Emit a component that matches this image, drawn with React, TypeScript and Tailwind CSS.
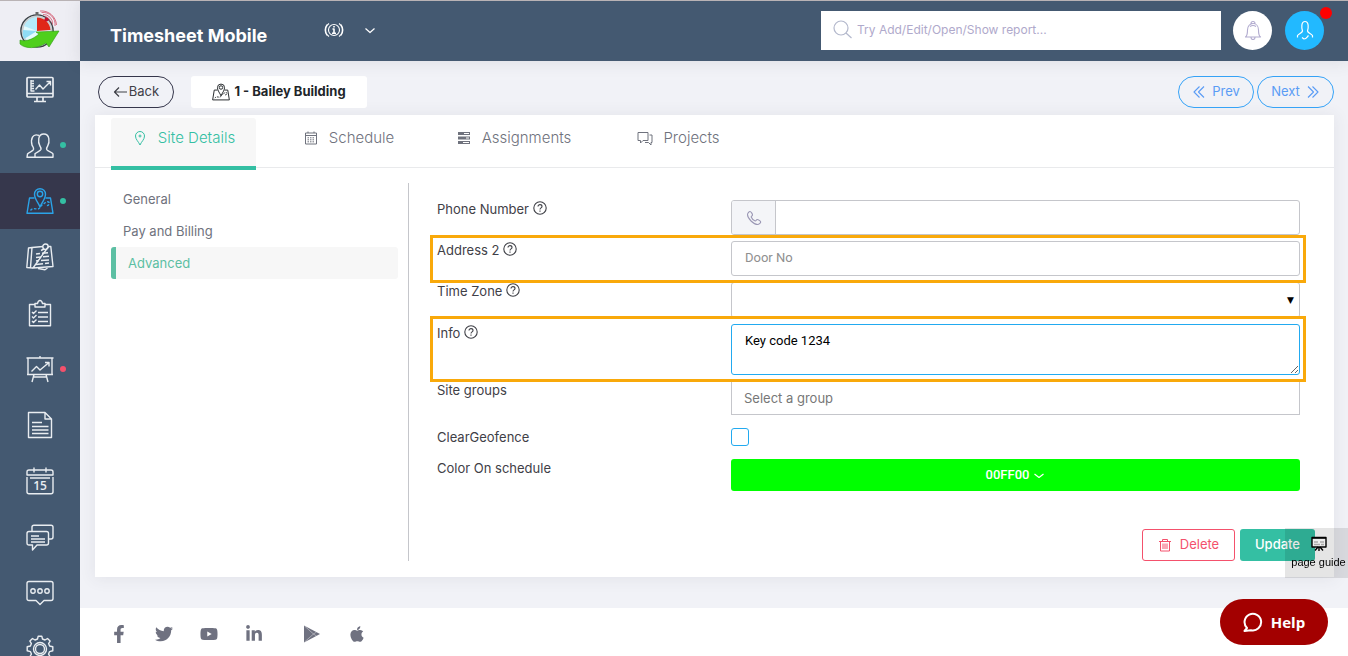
import { useState } from "react";
import type { ReactNode } from "react";
import {
  FaApple,
  FaFacebookF,
  FaLinkedinIn,
  FaTwitter,
  FaYoutube,
} from "react-icons/fa";

type IconProps = { children: ReactNode; className?: string; box?: number; stroke?: number };

function Icon({ children, className = "size-7", box = 28, stroke = 1.4 }: IconProps) {
  return (
    <svg
      viewBox={`0 0 ${box} ${box}`}
      className={className}
      fill="none"
      stroke="currentColor"
      strokeWidth={stroke}
      strokeLinejoin="round"
      aria-hidden="true"
    >
      {children}
    </svg>
  );
}

const mapPin = (
  <>
    <path d="M14 20C12.5 16 8.5 12 8.5 7.2a5.500 5.500 0 0 1 11 0C19.500 12 15.500 16 14 20z" />
    <circle cx="14" cy="7" r="2.700" />
    <path d="M8.500 11H3.500L1 26.300h26L24.500 11h-5" />
    <path d="M4.500 23.500c2-3 5-1.500 7-1.500 3 0 2.500-3 5-4.500 2-1 4-3.500 6-2.500s0 4-2 3.500" strokeDasharray="2.500 1.500" />
  </>
);

type NavItem = { name: string; icon: ReactNode; dot?: "green" | "red"; active?: boolean };

const NAV_ITEMS: NavItem[] = [
  {
    name: "Dashboard",
    icon: (
      <>
        <rect x="1" y="2.500" width="26" height="19.500" rx="1" strokeWidth="1.700" />
        <path d="M1 18.500h26M11 22v4M17 22v4M8 26.500h12" strokeWidth="1.700" />
        <path d="M5 5v11.500M5 6h3M5 8.500h3M5 11h3M5 13.500h3M5 16h3.500" />
        <path d="M9.500 14.500l4-4.500 3.500 4L24 7M20.500 6.500H24.500v4" />
      </>
    ),
  },
  {
    name: "Employees",
    dot: "green",
    icon: (
      <>
        <path d="M9 26.300h18v-3.500c-1.500-2-5.500-2.500-6.300-4.300-.4-1.500.3-2.500 1-3.500 2-4 2.300-12-3.900-12s-5.900 8-3.900 12c.7 1 1.400 2 1 3.500C14 20.300 10.500 21 9 22.800z" />
        <path d="M13 4.500c-6.500-2.500-8.500 3.500-7 9.500.4 1.500 2 2.500 1.500 4.500-.6 1.800-4.500 2.500-6 4.500l-.5 3.300h8" />
      </>
    ),
  },
  { name: "Sites", dot: "green", active: true, icon: mapPin },
  {
    name: "Notes",
    icon: (
      <>
        <path d="M6 4.500l11-1M22.500 3.500h2.300L27 23.500 7 25z" />
        <path d="M6 4.500L2.500 5 .800 24.500 7 25M6 4.500L4.500 24.500M12 25.500l7 1.300 2.500-1.800" />
        <circle cx="19.500" cy="3.700" r="2.700" />
        <path d="M18 6l-3 1.500M10 11l4-.500M16 10.200l6-.500M10 14.500l5-.500M17 13.800l6-.500M10 18l3-.500M15 17.500l8-.500M10 21.500l7-.700M19 20.500l4-.500" />
      </>
    ),
  },
  {
    name: "Tasks",
    icon: (
      <>
        <path d="M9 5.500H3.500v21.300h21V5.500H19" />
        <path d="M9 8V4.500h2.500C12 2.300 13 1.500 14 1.500s2 .8 2.500 3H19V8z" />
        <path d="M12 13.500h10M12 18h10M12 22.500h10M6 13l1.500 1.500L10.500 11.500M6 17.500L7.500 19l3-3M6 22l1.500 1.500 3-3" />
      </>
    ),
  },
  {
    name: "Reports",
    dot: "red",
    icon: (
      <>
        <path d="M0.500 3h27M14 1v2M2 3v16.500h24V3M1 19.500h26M8 19.500L6 27M20 19.500l2 7.500M7.500 22h13" />
        <path d="M5.500 16.500l5-5 3.500 3.500L23 7.500M19 7.500h4v4" />
      </>
    ),
  },
  {
    name: "Documents",
    icon: (
      <>
        <path d="M2.500 1.500H19l6.500 6.500v18.500h-23zM19 1.500V8h6.500" />
        <path d="M6 11.500h10M6 15.500h16.500M6 19h16.500M6 22.500h16.500" />
      </>
    ),
  },
  {
    name: "Calendar",
    icon: (
      <>
        <path d="M1 8V5q0-2 2-2h22q2 0 2 2v3zM1 10v15q0 1.700 2 1.700h22q2 0 2-1.700V10M4 11h20M8 .500v5M20 .500v5" />
        <text x="14" y="23" textAnchor="middle" fontSize="12" fontFamily="Open Sans, sans-serif" fontWeight="600" fill="currentColor" stroke="none">
          15
        </text>
      </>
    ),
  },
  {
    name: "Messages",
    icon: (
      <>
        <path d="M6 8V4q0-1.800 2-1.800h17q2 0 2 1.800v10q0 2-2 2h-2.500" />
        <path d="M3 8.500h17.500q2 0 2 2V20q0 2-2 2H11l-4.500 5v-5H3q-2 0-2-2v-9.500q0-2 2-2z" />
        <path d="M5 13h8M5 16h14M5 19h14" />
      </>
    ),
  },
  {
    name: "Chat",
    icon: (
      <>
        <path d="M3 2.500h22q2 0 2 2v15q0 2-2 2h-7l-4 4-4-4H3q-2 0-2-2v-15q0-2 2-2z" />
        <circle cx="7" cy="12" r="2.200" />
        <circle cx="14" cy="12" r="2.200" />
        <circle cx="21" cy="12" r="2.200" />
      </>
    ),
  },
  {
    name: "Settings",
    icon: (
      <>
        <path d="M11.500 4l.7-2.800h3.600l.7 2.800 2.500 1 2.500-1.500 2.600 2.600L22.600 8.600l1 2.400 3.200.8v4l-3.200.8-1 2.500 1.500 2.600-2.500 2.500-2.600-1.500-2.500 1-.7 3.100h-3.600l-.7-3.100-2.500-1-2.600 1.500L3.900 21.700l1.500-2.600-1-2.500-3.200-.8v-4l3.200-.8 1-2.400-1.500-2.500 2.600-2.600L9 5z" />
        <circle cx="14" cy="14" r="6.500" />
        <circle cx="14" cy="14" r="4.500" />
      </>
    ),
  },
];

const TABS = [
  {
    name: "Site Details",
    width: "w-[145px]",
    icon: (
      <>
        <path d="M8 15C6.500 11.500 3.500 9.500 3.500 6a4.500 4.500 0 0 1 9 0C12.500 9.500 9.500 11.500 8 15z" />
        <path d="M8 4.500v3M6.500 6h3" />
      </>
    ),
  },
  {
    name: "Schedule",
    width: "w-[185px]",
    icon: (
      <>
        <path d="M2.500 3h11v11h-11zM2.500 5.500h11M5 1.500V3M11 1.500V3" />
        <path d="M4.500 7.800h7M4.500 9.800h7M4.500 11.800h7" strokeDasharray="1.500 1" />
      </>
    ),
  },
  {
    name: "Assignments",
    width: "w-[145px]",
    icon: (
      <>
        <path d="M2 3.500h12M2 8h12M2 12.500h12" strokeWidth="3" />
        <path d="M8 3.500h5M10 8h3M7 12.500h6" stroke="#fff" />
      </>
    ),
  },
  {
    name: "Projects",
    width: "w-[185px]",
    icon: (
      <path d="M1 2.500h10v8H6l-2.500 2.500v-2.500H1zM12.500 5H15v7.500h-1V15l-2.500-2.500H8" />
    ),
  },
];

const SECTIONS = ["General", "Pay and Billing", "Advanced"];

function PlayStore({ className }: { className?: string }) {
  return (
    <svg viewBox="0 0 18 18" className={className} aria-hidden="true">
      <path d="M1 .500v17L17 9z" fill="currentColor" />
      <path d="M1.500 1l9 8-9 8M10.500 9l3-2M10.500 9l3 2" fill="none" stroke="#fff" strokeWidth=".4" />
    </svg>
  );
}

const SOCIALS = [
  { name: "Facebook", Glyph: FaFacebookF, gap: "" },
  { name: "Twitter", Glyph: FaTwitter, gap: "ml-[27px]" },
  { name: "YouTube", Glyph: FaYoutube, gap: "ml-[27px]" },
  { name: "LinkedIn", Glyph: FaLinkedinIn, gap: "ml-[27px]" },
  { name: "Google Play", Glyph: PlayStore, gap: "ml-10" },
  { name: "App Store", Glyph: FaApple, gap: "ml-[27px]" },
];

function Logo() {
  return (
    <svg viewBox="0 0 44 44" className="size-11" aria-hidden="true">
      <circle cx="19" cy="22" r="16" fill="#e4fafd" stroke="#3b4146" strokeWidth="1.600" />
      <circle cx="19" cy="22" r="14.500" fill="none" stroke="#c9ced1" strokeWidth="1.800" />
      <path d="M19 22L6 17a14 14 0 0 1 13-9z" fill="#b4eafa" />
      <path d="M19 22L6 30a14 14 0 0 1-1-9z" fill="#8fdcf5" />
      <path d="M19 22V8.500A13.500 13.500 0 0 1 32.500 21z" fill="#e02718" />
      <path d="M17.500 3h3v3h-3z" fill="#666" />
      <circle cx="28.500" cy="10.500" r="2" fill="#c4102e" />
      <path d="M27 7.500a6 6 0 0 1 5 6M25 5.500a9 9 0 0 1 9.500 10M23.500 3.500a12 12 0 0 1 13.500 13.500M22 2a15 15 0 0 1 16.500 14" fill="none" stroke="#d0536a" strokeWidth=".8" />
      <path d="M2 31c5 2 12 0 19-6l-3-2 23-1-10 16-3-4c-9 6-21 6-26 1z" fill="#4fcf1c" stroke="#2e9a12" strokeWidth=".6" />
    </svg>
  );
}

function Sidebar() {
  return (
    <aside className="flex h-full w-20 shrink-0 flex-col overflow-hidden bg-[#445971]">
      <a href="#home" aria-label="Home" className="flex h-[60px] shrink-0 items-center justify-center bg-[#eeeef4]">
        <Logo />
      </a>
      <nav>
        {NAV_ITEMS.map((item) => (
          <a
            key={item.name}
            href={`#${item.name.toLowerCase()}`}
            aria-label={item.name}
            className={`relative flex h-14 items-center justify-center ${
              item.active ? "bg-[#36374c] text-[#2ba3e8]" : "text-[#e9edf1]"
            }`}
          >
            <Icon>{item.icon}</Icon>
            {item.dot && (
              <span
                className={`absolute right-3.5 size-1.5 rounded-full ${
                  item.dot === "green" ? "bg-[#34bfa3]" : "bg-[#f4516c]"
                }`}
              />
            )}
          </a>
        ))}
      </nav>
    </aside>
  );
}

function Header() {
  return (
    <header className="relative flex h-[60px] shrink-0 items-center bg-[#445971] pr-6 pb-0.5 pl-[30px] text-white shadow-[0_1px_15px_1px_rgba(69,65,78,0.1)]">
      <h1 className="w-[214px] pt-3 text-lg font-bold">Timesheet Mobile</h1>
      <button type="button" aria-label="Information">
        <Icon className="size-5" box={20} stroke={1.1}>
          <circle cx="10" cy="10" r="5.500" />
          <path d="M5 3.500a8 8 0 0 0 0 13M15 3.500a8 8 0 0 1 0 13M3 4.500a9 9 0 0 0 0 11M17 4.500a9 9 0 0 1 0 11" />
          <path d="M10 6v1.600M8.500 9H10v4M8 13.200h4" strokeWidth="1.600" />
        </Icon>
      </button>
      <button type="button" aria-label="Open menu" className="ml-5">
        <Icon className="size-3" box={12} stroke={1.2}>
          <path d="M1.500 4.500l4.500 4 4.500-4" />
        </Icon>
      </button>
      <label className="ml-auto flex h-[39px] w-[400px] items-center gap-1 bg-white pl-3">
        <Icon className="size-5 text-[#b3b8cc]" box={20} stroke={1.2}>
          <circle cx="8" cy="8" r="7" />
          <path d="M13 13l5.500 5" />
        </Icon>
        <input
          type="text"
          aria-label="Search"
          placeholder="Try Add/Edit/Open/Show report..."
          className="min-w-0 flex-1 text-xs text-gray-700 outline-none placeholder:text-[#afa9cb]"
        />
      </label>
      <button type="button" aria-label="Notifications" className="ml-3 flex size-[39px] items-center justify-center rounded-full bg-white text-[#b1abcf]">
        <Icon className="size-5" box={20} stroke={1.1}>
          <path d="M2.500 17c2-1.500 2-3 2-7 0-4 2.500-6.500 5.500-6.500s5.500 2.500 5.500 6.500c0 4 0 5.500 2 7zM8 3.500a2 2 0 0 1 4 0M8 17.500a2 2 0 0 0 4 0M7 6.500q3-2 6 0" />
        </Icon>
      </button>
      <button type="button" aria-label="Profile" className="relative ml-[13px] flex size-[39px] items-center justify-center rounded-full bg-[#22b9ff]">
        <Icon className="size-5" box={20} stroke={1.2}>
          <path d="M2.500 17.500v-2c1.500-2 4.500-2.500 5-4.500C6.500 8 6 1.500 10 1.500S13.500 8 12.500 11c.5 2 3.500 2.500 5 4.500v2M7 17.500l2 1.500c2.500 0 3-2 4.500-3.500" />
        </Icon>
        <span className="absolute -top-1 -right-2 size-3 rounded-full bg-[#ff0000]" />
      </button>
    </header>
  );
}

function HelpMark() {
  return (
    <Icon className="mb-0.5 size-3.5" box={14} stroke={1.1}>
      <circle cx="7" cy="7" r="6.200" />
      <path d="M5 5.500c0-2.500 4-2.500 4 0C9 7 7 6.800 7 8.500M7 9.500v1.300" />
    </Icon>
  );
}

type FieldProps = {
  id: string;
  label: string;
  help?: boolean;
  highlight?: "short" | "tall";
  children: ReactNode;
};

function Field({ id, label, help, highlight, children }: FieldProps) {
  return (
    <div className="relative grid grid-cols-[294px_minmax(0,1fr)] items-start">
      <label htmlFor={id} className="flex items-center gap-1 text-[13px] leading-[18px] text-[#3f4047]">
        {label}
        {help && <HelpMark />}
      </label>
      {children}
      {highlight && (
        <div
          className={`pointer-events-none absolute -right-1.5 -left-[7px] z-10 border-3 border-[#f9a90a] ${
            highlight === "tall" ? "-top-2 -bottom-[7px]" : "-top-1.5 -bottom-[7px]"
          }`}
        />
      )}
    </div>
  );
}

function AdvancedForm() {
  const [address, setAddress] = useState("");
  const [info, setInfo] = useState("Key code 1234");
  const [clearGeofence, setClearGeofence] = useState(false);

  return (
    <form className="flex-1 pt-[17px] pr-[18px] pl-7" onSubmit={(e) => e.preventDefault()}>
      <div className="flex flex-col gap-1.5">
        <Field id="phone" label="Phone Number" help>
          <div className="flex h-[35px] overflow-hidden rounded-[3px] border border-[#c5c6cb]">
            <span className="flex w-11 items-center justify-center border-r border-[#c5c6cb] bg-[#f4f5f8] text-[#9b98b5]">
              <Icon className="size-4" box={16} stroke={1.1}>
                <path d="M4 1.500c1 0 2.500 2.500 2.500 3.500S5 6 5.200 7c.6 1.500 2.300 3.500 4 4 1 .2 1-1.500 2-1.500s3.500 1.500 3.500 2.500-2 2.500-3 2.500C7.500 14.500 1.500 8.500 1.500 4.500c0-1 1.500-3 2.500-3z" />
              </Icon>
            </span>
            <input id="phone" type="tel" className="min-w-0 flex-1 px-3 text-sm outline-none" />
          </div>
        </Field>
        <Field id="address2" label="Address 2" help highlight="short">
          <input
            id="address2"
            type="text"
            value={address}
            onChange={(e) => setAddress(e.target.value)}
            placeholder="Door No"
            className="h-[35px] w-full rounded-[3px] border border-[#c5c6cb] px-[13px] pb-0.5 font-[Roboto,sans-serif] text-[13px] outline-none placeholder:text-[#8f8f8f]"
          />
        </Field>
        <Field id="timezone" label="Time Zone" help>
          <div className="relative">
            <select id="timezone" className="block h-9 w-full appearance-none rounded-[3px] border border-[#c5c6cb] px-3 text-sm outline-none">
              <option value=""></option>
            </select>
            <span className="pointer-events-none absolute top-3 right-1.5 font-['DejaVu_Sans',sans-serif] text-[9px] leading-3 text-black">▼</span>
          </div>
        </Field>
        <Field id="info" label="Info" help highlight="tall">
          <textarea
            id="info"
            value={info}
            onChange={(e) => setInfo(e.target.value)}
            className="block h-[51px] w-full rounded-[3px] border border-[#22aaf0] px-[13px] py-2 font-[Roboto,sans-serif] text-[13px] leading-4 text-black outline-none"
          />
        </Field>
        <Field id="groups" label="Site groups">
          <input
            id="groups"
            type="text"
            placeholder="Select a group"
            className="h-[34px] w-full border border-[#c5c6cb] px-3 text-[13px] outline-none placeholder:text-[#777]"
          />
        </Field>
      </div>
      <div className="mt-[13px] flex flex-col gap-[13px]">
        <Field id="geofence" label="ClearGeofence">
          <input
            id="geofence"
            type="checkbox"
            checked={clearGeofence}
            onChange={(e) => setClearGeofence(e.target.checked)}
            className="size-[18px] appearance-none rounded-[3px] border border-[#22aaf0] bg-white checked:bg-[#22aaf0]"
          />
        </Field>
        <Field id="color" label="Color On schedule">
          <button
            id="color"
            type="button"
            className="flex h-8 w-full items-center justify-center gap-1 rounded-[3px] bg-[#00ff00] font-[Roboto,sans-serif] text-[13px] font-medium text-white"
          >
            00FF00
            <Icon className="size-3" box={12} stroke={1.2}>
              <path d="M1.500 5L6 8.500 10.500 5" />
            </Icon>
          </button>
        </Field>
      </div>
      <div className="mt-[38px] -mr-[15px] flex justify-end gap-[5px] text-[13px]">
        <button type="button" className="flex h-8 w-[93px] items-center justify-center gap-2 rounded-[3px] border border-[#f4516c] text-[#f4516c]">
          <Icon className="size-3.5" box={14} stroke={1}>
            <path d="M1 3.500h12M4.500 3.500v-2h5v2M2.500 3.500v9.500h9V3.500M5 5.500v5.500M7 5.500v5.500M9 5.500v5.500" />
          </Icon>
          Delete
        </button>
        <button type="submit" className="h-8 w-[75px] rounded-[3px] bg-[#34bfa3] font-medium text-white">
          Update
        </button>
      </div>
    </form>
  );
}

function SiteCard() {
  const [tab, setTab] = useState("Site Details");
  const [section, setSection] = useState("Advanced");

  return (
    <section className="mr-3.5 ml-[15px] bg-white shadow-[0_1px_15px_1px_rgba(69,65,78,0.08)]">
      <div className="flex h-[53px] items-start border-b border-[#e9eaec] px-4 pt-[3px]">
        {TABS.map((t) => (
          <button
            key={t.name}
            type="button"
            onClick={() => setTab(t.name)}
            className={`flex h-[52px] items-start justify-center gap-2.5 rounded-t-[3px] border-b-4 pt-2.5 text-[15px] leading-5 font-light ${t.width} ${
              t.name === tab
                ? "border-[#34bfa3] bg-[#f7f7f7] text-[#34bfa3]"
                : "border-transparent text-[#6f727d]"
            }`}
          >
            <Icon className="mt-0.5 size-4" box={16} stroke={1}>{t.icon}</Icon>
            {t.name}
          </button>
        ))}
      </div>
      <div className="flex px-4 pt-[15px] pb-4">
        <div className="w-[298px] shrink-0 border-r border-[#c5c6cb] pr-2.5">
          {SECTIONS.map((name) => (
            <button
              key={name}
              type="button"
              onClick={() => setSection(name)}
              className={`block h-8 w-full rounded-[3px] pt-0.5 text-left text-[13px] ${
                name === section
                  ? "border-l-5 border-[#5cbfa3] bg-[#f7f7f7] pl-3 text-[#5cbfa3]"
                  : "pl-3 text-[#6f727d]"
              }`}
            >
              {name}
            </button>
          ))}
        </div>
        <AdvancedForm />
      </div>
    </section>
  );
}

export default function App() {
  return (
    <div className="flex h-screen overflow-hidden border-t border-[#b9b3b5] bg-[#f1f2f7] font-[Inter,'Open_Sans',sans-serif]">
      <Sidebar />
      <div className="flex min-w-0 flex-1 flex-col">
        <Header />
        <main className="flex-1">
          <div className="flex items-center pt-[15px] pr-3.5 pb-[7px] pl-[18px] text-[13px]">
            <button type="button" className="flex h-8 w-[76px] items-center justify-center gap-0.5 rounded-full border border-[#36374c] text-[#3f4047]">
              <Icon className="size-3.5" box={14} stroke={1.2}>
                <path d="M14 7H1.500M6 2.500L1.500 7 6 11.500" />
              </Icon>
              Back
            </button>
            <h2 className="ml-[17px] flex h-8 w-44 items-center justify-center gap-1 rounded-[3px] bg-white font-bold text-[#212529]">
              <Icon className="size-[18px]" stroke={1.5}>{mapPin}</Icon>
              1 - Bailey Building
            </h2>
            <button type="button" className="ml-auto flex h-8 w-[76px] items-center justify-center gap-1.5 rounded-full border border-[#36a3f7] text-[#5a9cf5]">
              <Icon className="size-3.5" box={14} stroke={1.1}>
                <path d="M7.500 1.500L2 7l5.500 5.500M12 1.500L6.500 7l5.500 5.500" />
              </Icon>
              Prev
            </button>
            <button type="button" className="ml-[3px] flex h-8 w-[77px] items-center justify-center gap-1.5 rounded-full border border-[#36a3f7] text-[#5a9cf5]">
              Next
              <Icon className="size-3.5" box={14} stroke={1.1}>
                <path d="M2 1.500L7.500 7 2 12.500M6.500 1.500L12 7l-5.500 5.500" />
              </Icon>
            </button>
          </div>
          <SiteCard />
        </main>
        <footer className="flex h-12 shrink-0 items-center bg-white pt-1 pl-[30px] text-[#6f7180]">
          {SOCIALS.map(({ name, Glyph, gap }) => (
            <a key={name} href={`#${name.replace(" ", "-").toLowerCase()}`} aria-label={name} className={gap}>
              <Glyph className="size-[18px]" />
            </a>
          ))}
        </footer>
      </div>
      <button type="button" className="fixed right-0 bottom-[78px] z-20 flex h-[50px] w-[63px] flex-col items-center justify-center gap-0.5 bg-black/10 pl-1 font-['Liberation_Sans',sans-serif] text-[11px] leading-4 whitespace-nowrap text-black">
        <Icon className="size-4" box={16} stroke={1.4}>
          <path d="M1 1.500h14v9.500H1z" fill="#eee" />
          <path d="M1 2h14M8 11v4M7 11l-3 3.500M9 11l3 3.500" />
          <path d="M3 6h4M9 6h4M3 8.500h6M10 8.500h3" stroke="#aaa" />
        </Icon>
        page guide
      </button>
      <button type="button" className="fixed right-5 bottom-[11px] z-20 flex h-[46px] w-[108px] items-center justify-center gap-2 rounded-full bg-[#a30000] font-['Open_Sans',sans-serif] text-[15px] font-bold text-white">
        <Icon className="size-5" box={20} stroke={2}>
          <path d="M4 16a8.300 8.300 0 1 1 4 2.200L1.500 19z" />
        </Icon>
        Help
      </button>
    </div>
  );
}
